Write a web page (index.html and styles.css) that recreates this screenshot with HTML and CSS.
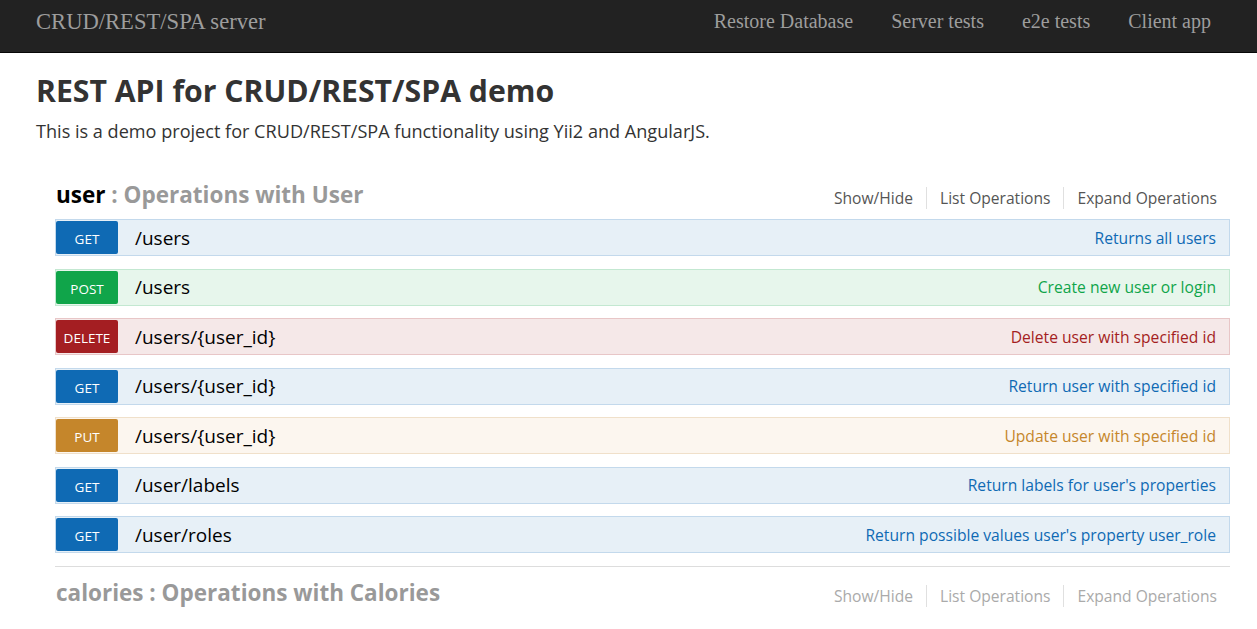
FILE: index.html
```html
<!DOCTYPE html>
<html>
<head>
<meta charset="utf-8">
<title>CRUD/REST/SPA server</title>
<link rel="stylesheet" href="styles.css">
</head>
<body>
<nav class="navbar">
  <a class="brand" href="#">CRUD/REST/SPA server</a>
  <ul class="nav-links">
    <li><a href="#">Restore Database</a></li>
    <li><a href="#">Server tests</a></li>
    <li><a href="#">e2e tests</a></li>
    <li><a href="#">Client app</a></li>
  </ul>
</nav>
<main class="page">
  <div class="info">
    <h1 class="info-title">REST API for CRUD/REST/SPA demo</h1>
    <p class="info-desc">This is a demo project for CRUD/REST/SPA functionality using Yii2 and AngularJS.</p>
  </div>
  <section class="resource">
    <div class="resource-head">
      <h2 class="resource-title"><span class="res-name">user</span> : Operations with User</h2>
      <ul class="res-options">
        <li>Show/Hide</li>
        <li>List Operations</li>
        <li>Expand Operations</li>
      </ul>
    </div>
    <ul class="ops">
      <li class="op op-get"><span class="method">GET</span><span class="path">/users</span><span class="summary">Returns all users</span></li>
      <li class="op op-post"><span class="method">POST</span><span class="path">/users</span><span class="summary">Create new user or login</span></li>
      <li class="op op-delete"><span class="method">DELETE</span><span class="path">/users/{user_id}</span><span class="summary">Delete user with specified id</span></li>
      <li class="op op-get"><span class="method">GET</span><span class="path">/users/{user_id}</span><span class="summary">Return user with specified id</span></li>
      <li class="op op-put"><span class="method">PUT</span><span class="path">/users/{user_id}</span><span class="summary">Update user with specified id</span></li>
      <li class="op op-get"><span class="method">GET</span><span class="path">/user/labels</span><span class="summary">Return labels for user's properties</span></li>
      <li class="op op-get"><span class="method">GET</span><span class="path">/user/roles</span><span class="summary">Return possible values user's property user_role</span></li>
    </ul>
  </section>
  <section class="resource resource-muted">
    <div class="resource-head">
      <h2 class="resource-title">calories : Operations with Calories</h2>
      <ul class="res-options">
        <li>Show/Hide</li>
        <li>List Operations</li>
        <li>Expand Operations</li>
      </ul>
    </div>
  </section>
</main>
</body>
</html>
```
FILE: styles.css
```css
html, body {
  margin: 0;
  padding: 0;
  background: #fff;
}
body {
  font-family: "Open Sans", "Noto Sans", sans-serif;
  color: #333;
}
.navbar {
  height: 52px;
  background: #222;
  border-bottom: 1px solid #080808;
  display: flex;
  align-items: center;
  justify-content: space-between;
  padding: 0 27px 0 36px;
  font-family: "Liberation Serif", serif;
}
.brand {
  color: #9d9d9d;
  font-size: 22.6px;
  text-decoration: none;
  margin-top: -8px;
}
.nav-links {
  list-style: none;
  margin: 0;
  padding: 0;
  display: flex;
}
.nav-links a {
  display: block;
  padding: 0 19px;
  color: #9d9d9d;
  font-size: 20px;
  text-decoration: none;
  margin-top: -10px;
}
.page {
  padding: 0 27px 0 36px;
}
.info-title {
  margin: 0;
  padding-top: 19px;
  font-size: 30.2px;
  font-weight: 700;
  color: #333;
  line-height: 38px;
}
.info-desc {
  margin: 8px 0 0;
  font-size: 18.1px;
  line-height: 26px;
}
.resource {
  margin-left: 19px;
}
.resource + .resource {
  border-top: 1px solid #ddd;
  margin-top: 13px;
}
.resource-head {
  display: flex;
  justify-content: space-between;
  align-items: center;
  height: 50px;
  margin-top: 25px;
}
.resource-muted .resource-head {
  margin-top: 0;
}
.resource-title {
  margin: 0;
  font-size: 22.5px;
  font-weight: 700;
  color: #999;
  padding-left: 1px;
}
.res-name {
  color: #000;
}
.res-options {
  list-style: none;
  margin: 8px 13px 0 0;
  padding: 0;
  display: flex;
  font-size: 15.6px;
  color: #555;
}
.res-options li {
  padding: 0 13px;
  border-left: 1px solid #e0e0e0;
  line-height: 22px;
}
.res-options li:first-child {
  border-left: none;
}
.res-options li:last-child {
  padding-right: 0;
}
.resource-muted .res-options {
  color: #aaa;
}
.ops {
  list-style: none;
  margin: 0;
  padding: 0;
}
.op {
  display: flex;
  align-items: center;
  height: 35px;
  border: 1px solid;
  padding: 0 13px 0 0;
  margin-bottom: 12.5px;
}
.op:last-child {
  margin-bottom: 0;
}
.method {
  width: 62px;
  height: 33px;
  margin: 0 17px 0 0;
  border-radius: 2px;
  color: #fff;
  font-size: 13.5px;
  line-height: 36px;
  text-align: center;
  text-transform: uppercase;
}
.path {
  font-size: 19px;
  color: #000;
  flex: 1;
}
.summary {
  font-size: 15.65px;
}
.op-get { background: #e7f0f7; border-color: #c3d9ec; }
.op-get .method { background: #0f6ab4; }
.op-get .summary { color: #0f6ab4; }
.op-post { background: #e7f6ec; border-color: #c3e8d1; }
.op-post .method { background: #10a54a; }
.op-post .summary { color: #10a54a; }
.op-delete { background: #f5e8e8; border-color: #e8c6c7; }
.op-delete .method { background: #a41e22; }
.op-delete .summary { color: #a41e22; }
.op-put { background: #fcf6ef; border-color: #f0e0ca; }
.op-put .method { background: #c5862b; }
.op-put .summary { color: #c5862b; }
```
